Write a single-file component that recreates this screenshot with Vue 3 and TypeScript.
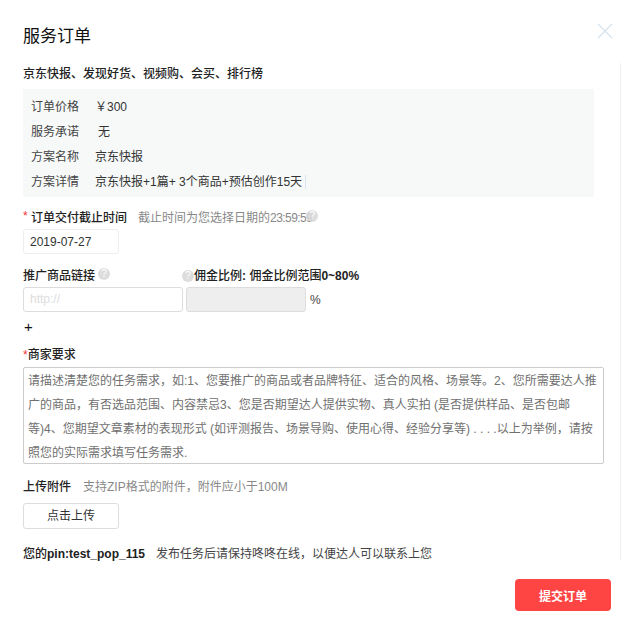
<script setup lang="ts">
const details = [
  { label: '订单价格', value: '￥300', cls: 'v-price' },
  { label: '服务承诺', value: '无', cls: 'v-none' },
  { label: '方案名称', value: '京东快报', cls: 'v-plain' },
  { label: '方案详情', value: '京东快报+1篇+ 3个商品+预估创作15天', cls: 'v-plain v-caret' },
]
const demandLines = [
  '请描述清楚您的任务需求，如:1、您要推广的商品或者品牌特征、适合的风格、场景等。2、您所需要达人推',
  '广的商品，有否选品范围、内容禁忌3、您是否期望达人提供实物、真人实拍 (是否提供样品、是否包邮',
  '等)4、您期望文章素材的表现形式 (如评测报告、场景导购、使用心得、经验分享等) . . . .以上为举例，请按',
  '照您的实际需求填写任务需求.',
]
</script>

<template>
  <div class="modal">
    <svg class="close" width="16" height="16" viewBox="0 0 16 16">
      <path d="M1 1L15 15M15 1L1 15" stroke="#d5e3ee" stroke-width="1.2" fill="none" />
    </svg>
    <h1 class="title">服务订单</h1>
    <div class="body">
      <div class="channels">京东快报、发现好货、视频购、会买、排行榜</div>
      <div class="panel">
        <div v-for="d in details" :key="d.label" class="detail">
          <span class="label">{{ d.label }}</span>
          <span :class="d.cls">{{ d.value }}</span>
        </div>
      </div>

      <div class="deadline-head">
        <span class="star">*</span>
        <span class="strong">订单交付截止时间</span>
        <span class="hint">截止时间为您选择日期的<span class="tight">23:59:59</span></span>
        <span class="help help-over">?</span>
      </div>
      <div class="date">2019-07-27</div>

      <div class="link-head">
        <span class="strong link-title">推广商品链接</span>
        <span class="help">?</span>
        <span class="help help-second">?</span>
        <span class="strong">佣金比例<b class="latin">: </b>佣金比例范围<b class="latin">0~80%</b></span>
      </div>
      <div class="link-row">
        <div class="input url">http://</div>
        <div class="input rate"></div>
        <span class="percent">%</span>
      </div>
      <div class="plus">+</div>

      <div class="demand-head"><span class="star">*</span><span class="strong">商家要求</span></div>
      <div class="demand">
        <div v-for="line in demandLines" :key="line" class="demand-line">{{ line }}</div>
      </div>

      <div class="upload-head">
        <span class="strong">上传附件</span>
        <span class="hint">支持ZIP格式的附件，附件应小于100M</span>
      </div>
      <div class="upload">点击上传</div>
      <div class="pin">
        <span class="strong">您的<b class="latin">pin:test_pop_115</b></span>
        <span class="pin-note">发布任务后请保持咚咚在线，以便达人可以联系上您</span>
      </div>
    </div>
    <div class="footer">
      <button class="submit" type="button">提交订单</button>
    </div>
  </div>
</template>

<style>
html, body { margin: 0; background: #fff; overflow: hidden; }
</style>

<style scoped>
.modal {
  position: relative;
  width: 621px;
  height: 624px;
  box-sizing: border-box;
  padding: 26px 0 0 23px;
  font-family: "Liberation Sans", "Noto Sans CJK SC", sans-serif;
  font-size: 12px;
  color: #333;
  background: #fff;
}
.close { position: absolute; left: 597px; top: 23px; }
.title { margin: 0; font-size: 17px; line-height: 22px; font-weight: 400; color: #111; }
.body {
  position: absolute;
  left: 0;
  top: 63px;
  width: 621px;
  height: 497px;
  box-sizing: border-box;
  padding: 2px 0 0 23px;
  border-right: 1px solid #f1f1f1;
}
.channels { font-weight: 500; line-height: 18px; color: #222; }
.panel {
  width: 571px;
  height: 108px;
  margin-top: 6px;
  padding: 6px 0 0 8px;
  box-sizing: border-box;
  background: #f7f9f9;
}
.detail { display: flex; height: 25px; line-height: 25px; }
.label { width: 64px; color: #444; }
.v-price { margin-left: 0; }
.v-none { margin-left: 3px; }
.v-caret { padding-right: 3px; border-right: 1px solid #d5e3f2; height: 14px; line-height: 14px; margin-top: 5px; }
.star { color: #e33; }
.strong { font-weight: 500; color: #222; }
.latin { font-weight: 700; }
.hint { color: #888; }
.tight { letter-spacing: -0.55px; }
.help {
  display: inline-block;
  flex: none;
  width: 12px;
  height: 12px;
  border-radius: 50%;
  background: rgba(215, 215, 215, 0.85);
  color: #fff;
  font-size: 10px;
  line-height: 12px;
  text-align: center;
}
.deadline-head {
  display: flex;
  align-items: center;
  height: 18px;
  margin-top: 10px;
}
.deadline-head .star { width: 8px; }
.deadline-head .hint { margin-left: 11px; }
.help-over { margin-left: -6px; }
.date {
  width: 96px;
  height: 25px;
  margin-top: 4px;
  padding-left: 6px;
  box-sizing: border-box;
  border: 1px solid #eee;
  border-radius: 3px;
  line-height: 24px;
  color: #333;
}
.link-head {
  display: flex;
  align-items: center;
  height: 18px;
  margin-top: 11px;
}
.link-head .help { margin-left: 3px; }
.link-head .help.help-second { margin-left: 72px; margin-top: 3px; }
.link-row { display: flex; align-items: center; margin-top: 4px; }
.input {
  height: 25px;
  box-sizing: border-box;
  border: 1px solid #ddd;
  border-radius: 3px;
  line-height: 22px;
}
.url { width: 160px; padding-left: 6px; color: #ddd; }
.rate { width: 120px; margin-left: 3px; background: #eee; }
.percent { margin-left: 4px; color: #444; }
.plus { height: 20px; margin: 5px 0 0 1px; font-size: 15px; line-height: 20px; color: #111; }
.demand-head { height: 18px; margin-top: 9px; line-height: 18px; }
.demand {
  width: 581px;
  height: 97px;
  margin-top: 3px;
  padding: 1px 4px;
  box-sizing: border-box;
  border: 1px solid #ccc;
  border-radius: 2px;
  overflow: hidden;
  line-height: 24px;
  color: #707070;
}
.demand-line { white-space: nowrap; }
.upload-head { display: flex; gap: 12px; height: 18px; margin-top: 14px; line-height: 18px; }
.upload {
  width: 96px;
  height: 26px;
  margin-top: 7px;
  box-sizing: border-box;
  border: 1px solid #ddd;
  border-radius: 3px;
  line-height: 24px;
  text-align: center;
  color: #333;
}
.pin { display: flex; gap: 11px; margin-top: 16px; line-height: 18px; }
.pin-note { color: #444; }
.footer {
  position: absolute;
  left: 515px;
  top: 579px;
}
.submit {
  display: block;
  width: 96px;
  height: 32px;
  padding: 0;
  border: 0;
  border-radius: 4px;
  background: #ff4444;
  color: #fff;
  font: 700 12px "Liberation Sans", "Noto Sans CJK SC", sans-serif;
}
</style>
